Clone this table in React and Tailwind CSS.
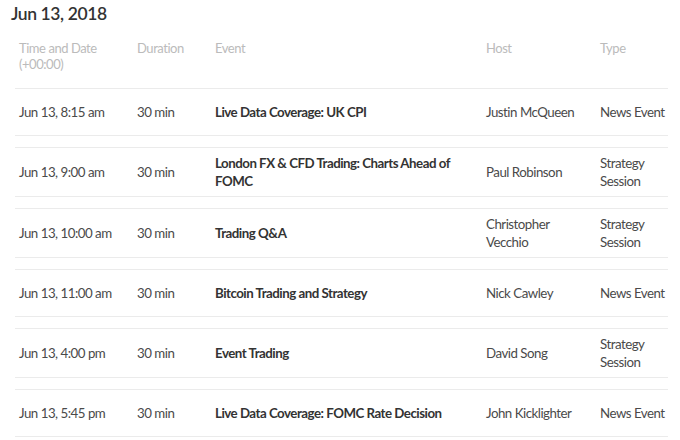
import React from 'react'

const rows = [
  { time: 'Jun 13, 8:15 am', duration: '30 min', event: 'Live Data Coverage: UK CPI', host: 'Justin McQueen', type: 'News Event' },
  { time: 'Jun 13, 9:00 am', duration: '30 min', event: 'London FX & CFD Trading: Charts Ahead of FOMC', host: 'Paul Robinson', type: 'Strategy Session' },
  { time: 'Jun 13, 10:00 am', duration: '30 min', event: 'Trading Q&A', host: 'Christopher Vecchio', type: 'Strategy Session' },
  { time: 'Jun 13, 11:00 am', duration: '30 min', event: 'Bitcoin Trading and Strategy', host: 'Nick Cawley', type: 'News Event' },
  { time: 'Jun 13, 4:00 pm', duration: '30 min', event: 'Event Trading', host: 'David Song', type: 'Strategy Session' },
  { time: 'Jun 13, 5:45 pm', duration: '30 min', event: 'Live Data Coverage: FOMC Rate Decision', host: 'John Kicklighter', type: 'News Event' },
]

export default function App() {
  return (
    <div className="w-[680px] h-[440px] overflow-hidden bg-white font-['Lato',sans-serif]">
      {/* Date heading */}
      <h1 className="pl-[11px] pt-[2px] h-[26px] leading-6 text-[17.5px] font-semibold tracking-[-0.4px] text-[#333]">Jun 13, 2018</h1>

      <div className="ml-[15px] w-[653px]">
        {/* Column headers */}
        <div className="flex h-[62px] pt-[14px] text-[13px] leading-4 tracking-[-0.45px] text-[#bbb]">
          <div className="w-[118px] pl-1">Time and Date<br />(+00:00)</div>
          <div className="w-[78px] pl-1">Duration</div>
          <div className="w-[271px] pl-1">Event</div>
          <div className="w-[114px] pl-1">Host</div>
          <div className="w-[72px] pl-1">Type</div>
        </div>

        {/* Rows */}
        {rows.map((r, i) => (
          <div
            key={i}
            className={`flex items-center min-h-[48px] py-[6px] border-y border-[#ebebeb] text-[13.3px] leading-[18px] tracking-[-0.5px] text-[#4a4a4a] ${i === 0 ? '' : 'mt-[11px]'}`}
          >
            <div className="w-[118px] pl-1">{r.time}</div>
            <div className="w-[78px] pl-1">{r.duration}</div>
            <div className="w-[271px] pl-1 pr-3 font-bold text-[#333]">{r.event}</div>
            <div className="w-[114px] pl-1 pr-2">{r.host}</div>
            <div className="w-[72px] pl-1">{r.type}</div>
          </div>
        ))}
      </div>
    </div>
  )
}
